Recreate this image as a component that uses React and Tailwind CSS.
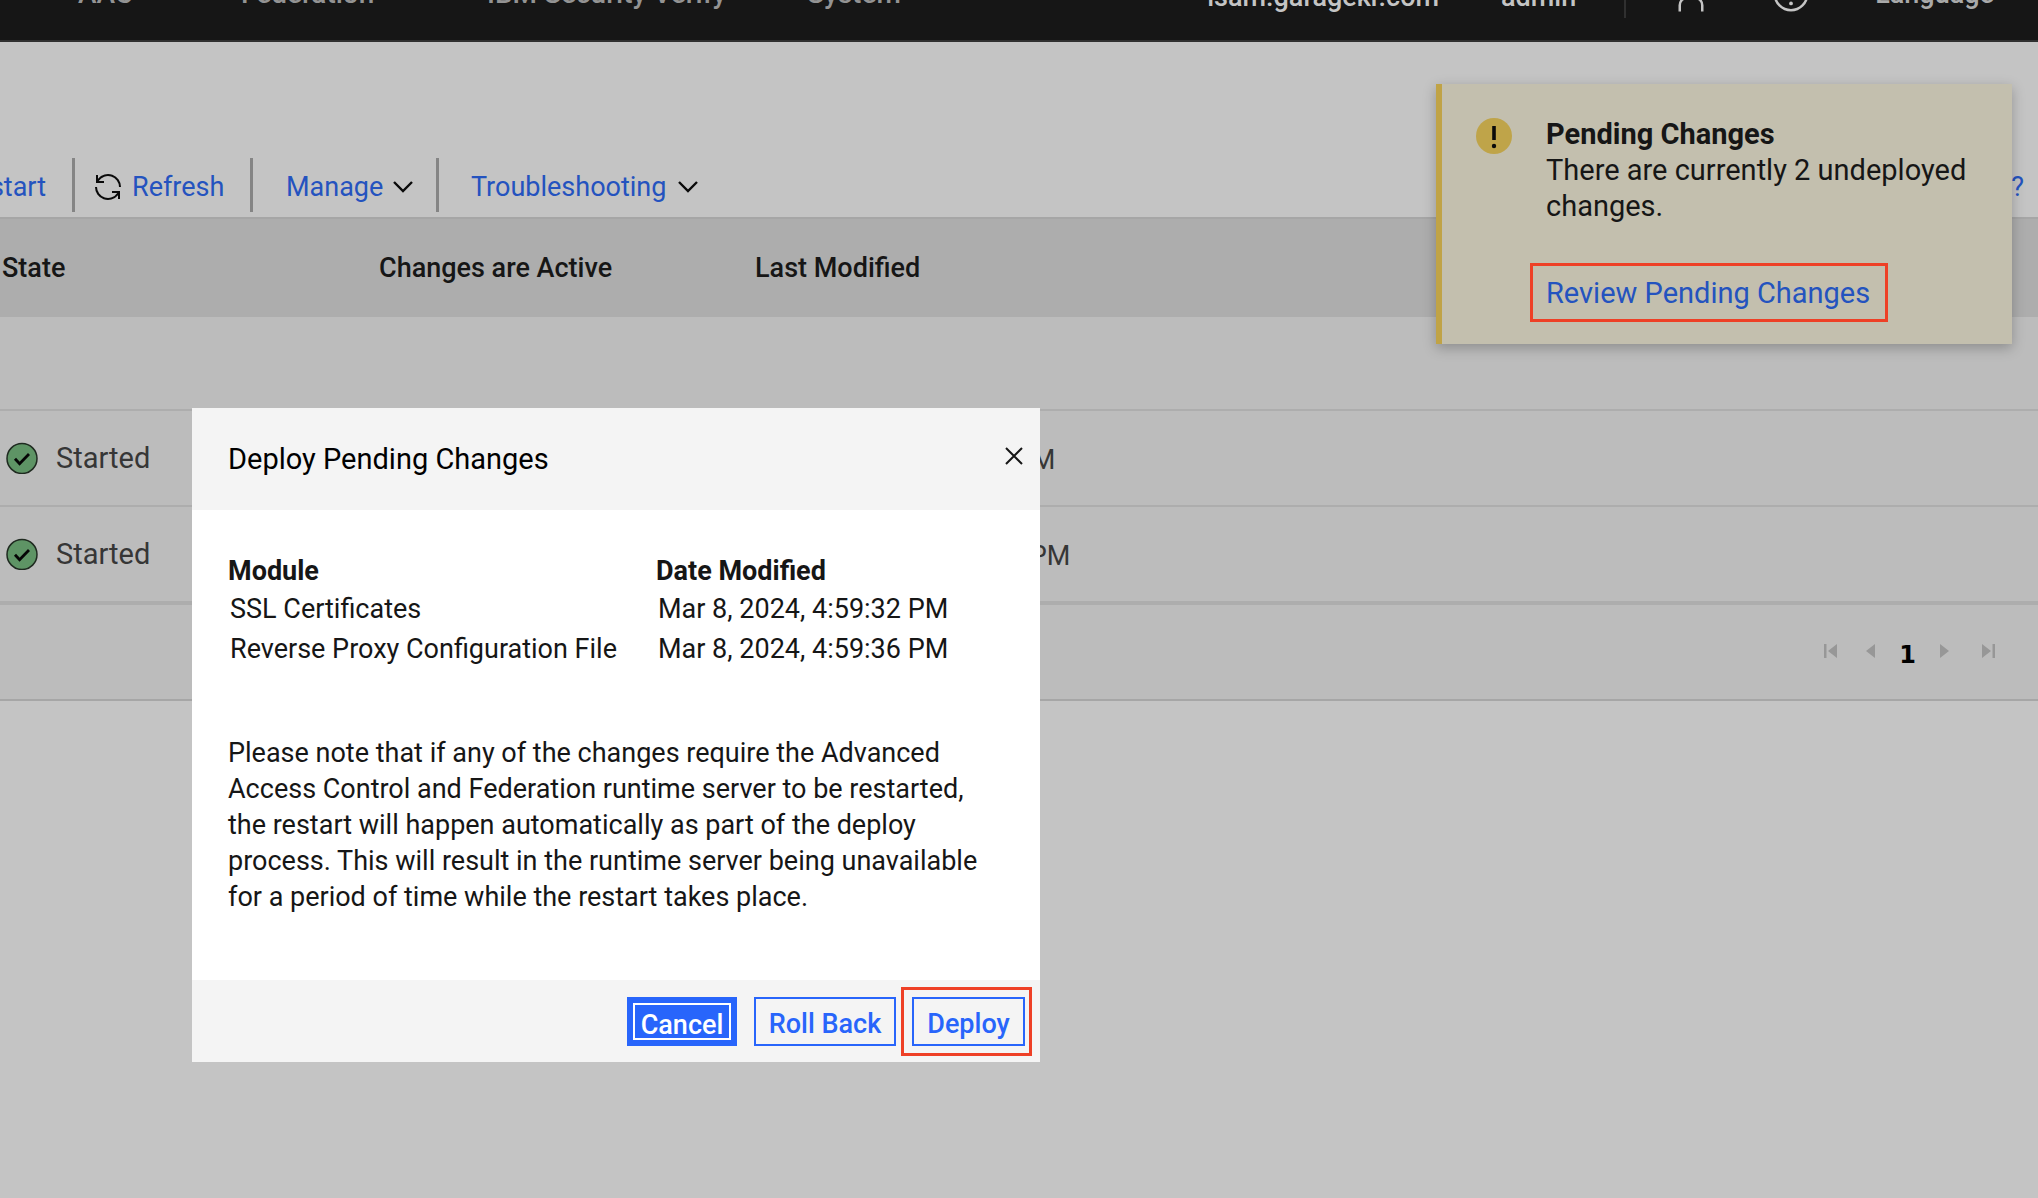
import React from "react";

const topLinks = [
  { label: "AAC", width: "w-[163px]" },
  { label: "Federation", width: "w-[246px]" },
  { label: "IBM Security Verify", width: "w-[320px]" },
  { label: "System", width: "w-[120px]" },
];

const instances = [
  { state: "Started", active: "True", modified: "Mar 8, 2024, 4:59:32 PM", row: "h-24 border-b-2" },
  { state: "Started", active: "True", modified: "Mar 8, 2024, 10:57:28 PM", row: "h-[98px] border-b-4" },
];

const modules = [
  { name: "SSL Certificates", date: "Mar 8, 2024, 4:59:32 PM" },
  { name: "Reverse Proxy Configuration File", date: "Mar 8, 2024, 4:59:36 PM" },
];

function UserIcon() {
  return (
    <svg width="40" height="40" viewBox="0 0 32 32" fill="currentColor" aria-hidden="true">
      <path d="M16 4a5 5 0 1 1-5 5 5 5 0 0 1 5-5m0-2a7 7 0 1 0 7 7 7 7 0 0 0-7-7zM26 30h-2v-5a5 5 0 0 0-5-5h-6a5 5 0 0 0-5 5v5H6v-5a7 7 0 0 1 7-7h6a7 7 0 0 1 7 7z" />
    </svg>
  );
}

function HelpIcon() {
  return (
    <svg width="40" height="40" viewBox="0 0 32 32" fill="currentColor" aria-hidden="true">
      <path d="M16 2a14 14 0 1 0 14 14A14 14 0 0 0 16 2zm0 26a12 12 0 1 1 12-12 12 12 0 0 1-12 12z" />
      <circle cx="16" cy="23.5" r="1.5" />
      <path d="M17 8h-1.5a4.5 4.5 0 0 0-4.5 4.5v.5h2v-.5a2.5 2.5 0 0 1 2.5-2.5H17a2.5 2.5 0 0 1 0 5h-2v4.5h2V17a4.5 4.5 0 0 0 0-9z" />
    </svg>
  );
}

function RefreshIcon() {
  return (
    <svg width="32" height="32" viewBox="0 0 32 32" fill="#0a0a0a" aria-hidden="true">
      <path d="M12 10H6.78A11 11 0 0 1 27 16h2A13 13 0 0 0 6 7.68V4H4v8h8zM20 22h5.22A11 11 0 0 1 5 16H3a13 13 0 0 0 23 8.32V28h2v-8h-8z" />
    </svg>
  );
}

function Chevron() {
  return (
    <svg width="20" height="12" viewBox="0 0 20 12" fill="none" stroke="#0a0a0a" strokeWidth="2.4" aria-hidden="true">
      <path d="M1 1l9 9 9-9" />
    </svg>
  );
}

function CheckIcon() {
  return (
    <svg width="32" height="32" viewBox="0 0 32 32" fill="none" aria-hidden="true">
      <circle cx="16" cy="16.5" r="15" fill="#5e9465" stroke="#1f2a20" strokeWidth="1.5" />
      <path d="M9 16.7l4.6 5L23 12.1" stroke="#050505" strokeWidth="2.8" />
    </svg>
  );
}

function WarningIcon() {
  return (
    <svg className="mt-0.5 shrink-0" width="36" height="36" viewBox="0 0 36 36" aria-hidden="true">
      <circle cx="18" cy="18" r="18" fill="#bfa449" />
      <rect x="16.2" y="8" width="3.6" height="14" fill="#0a0a0a" />
      <circle cx="18" cy="28" r="2.2" fill="#0a0a0a" />
    </svg>
  );
}

function PageButton({ label, children, width }) {
  return (
    <button type="button" aria-label={label} className="text-[#979797]">
      <svg width={width} height="16" viewBox={`0 0 ${width} 16`} fill="currentColor" aria-hidden="true">
        {children}
      </svg>
    </button>
  );
}

function Separator() {
  return <span className="w-[3px] shrink-0 bg-[#858585]" />;
}

function TopBar() {
  return (
    <header className="h-[42px] overflow-hidden border-b-2 border-[#303030] bg-[#161616] text-[27px] leading-9 font-medium text-[#c4c4c4]">
      <div className="-mt-[54px] flex h-24 items-center justify-between pr-[44px] pl-[78px]">
        <nav className="flex text-[28px] text-[#939393]">
          {topLinks.map((l) => (
            <a key={l.label} href="#" className={`${l.width} shrink-0 whitespace-nowrap`}>
              {l.label}
            </a>
          ))}
        </nav>
        <div className="flex items-center">
          <div className="flex gap-[62px] pt-1.5 pr-12">
            <span>isam.garagekr.com</span>
            <span>admin</span>
          </div>
          <span className="mr-[45px] h-12 w-0.5 bg-[#303030]" />
          <button type="button" aria-label="User" className="mr-[60px]">
            <UserIcon />
          </button>
          <button type="button" aria-label="Help" className="mr-16">
            <HelpIcon />
          </button>
          <button type="button" className="text-[#a9a9a9]">Language</button>
        </div>
      </div>
    </header>
  );
}

function Toolbar() {
  return (
    <div className="flex h-[54px] text-[#2453bf]">
      <button type="button" className="mr-[26px] flex w-[46px] items-center justify-end overflow-hidden pt-1">
        <span>Restart</span>
      </button>
      <Separator />
      <button type="button" className="flex w-[175px] items-center gap-2 pt-1 pl-[17px]">
        <RefreshIcon />
        Refresh
      </button>
      <Separator />
      <button type="button" className="flex w-[183px] items-center gap-2.5 pt-1 pl-[33px]">
        Manage
        <Chevron />
      </button>
      <Separator />
      <button type="button" className="flex items-center gap-3 pt-1 pl-8">
        Troubleshooting
        <Chevron />
      </button>
      <button type="button" aria-label="Help" className="ml-auto pt-1 pr-[14px]">
        ?
      </button>
    </div>
  );
}

function InstanceTable() {
  return (
    <table className="w-full table-fixed border-separate border-spacing-0 bg-[#bcbcbc] text-left">
      <thead>
        <tr>
          <th className="h-[100px] w-[377px] border-t-2 border-[#a6a6a6] bg-[#adadad] pl-0.5 font-medium text-[#161616]">State</th>
          <th className="w-[376px] border-t-2 border-[#a6a6a6] bg-[#adadad] pl-0.5 font-medium text-[#161616]">Changes are Active</th>
          <th className="border-t-2 border-[#a6a6a6] bg-[#adadad] pl-0.5 font-medium text-[#161616]">Last Modified</th>
        </tr>
      </thead>
      <tbody className="text-[#363636]">
        <tr>
          <td colSpan={3} className="h-[94px] border-b-2 border-[#adadad]" />
        </tr>
        {instances.map((r) => (
          <tr key={r.modified}>
            <td className={`${r.row} border-[#adadad] pl-1.5`}>
              <div className="flex items-center gap-[18px] text-[29px]">
                <CheckIcon />
                {r.state}
              </div>
            </td>
            <td className={`${r.row} border-[#adadad] pl-0.5`} />
            <td className={`${r.row} border-[#adadad] pt-1 pl-3`}>{r.modified}</td>
          </tr>
        ))}
      </tbody>
    </table>
  );
}

function Pagination() {
  return (
    <nav aria-label="Pages" className="flex h-24 items-center justify-end border-b-2 border-[#a6a6a6] bg-[#bcbcbc] pr-[43px] pb-0.5">
      <div className="flex items-center">
        <PageButton label="First page" width={13}>
          <path d="M0 1h2.5v14H0zM13 1v14L4 8z" />
        </PageButton>
        <span className="w-[29px]" />
        <PageButton label="Previous page" width={9}>
          <path d="M9 1v14L0 8z" />
        </PageButton>
      </div>
      <span className="px-6 pt-2 font-['DejaVu_Sans',sans-serif] text-2xl font-bold text-black">1</span>
      <div className="flex items-center">
        <PageButton label="Next page" width={9}>
          <path d="M0 1v14l9-7z" />
        </PageButton>
        <span className="w-[33px]" />
        <PageButton label="Last page" width={13}>
          <path d="M0 1v14l9-7zM10.500 1H13v14h-2.500z" />
        </PageButton>
      </div>
    </nav>
  );
}

function PendingNotice() {
  return (
    <aside className="absolute top-[84px] right-[26px] flex w-[576px] gap-[34px] border-l-[6px] border-[#c0a346] bg-[#c3bfae] pt-8 pr-5 pb-[22px] pl-[34px] text-[29px] shadow-[0_4px_12px_rgba(0,0,0,0.25)]">
      <WarningIcon />
      <div className="text-[#161616]">
        <h2 className="font-bold">Pending Changes</h2>
        <p>There are currently 2 undeployed changes.</p>
        <a href="#" className="mt-[39px] -ml-4 flex h-[59px] w-[358px] items-center border-[3px] border-[#ee4026] pl-[13px] whitespace-nowrap text-[#2453bf]">
          Review Pending Changes
        </a>
      </div>
    </aside>
  );
}

function DeployDialog() {
  return (
    <section role="dialog" aria-labelledby="deploy-title" className="absolute top-[408px] left-[192px] w-[848px] bg-white text-[#161616]">
      <div className="flex h-[102px] items-center justify-between bg-[#f4f4f4] pr-[17px] pl-9">
        <h2 id="deploy-title" className="text-[29px] text-black">Deploy Pending Changes</h2>
        <button type="button" aria-label="Close" className="pb-1.5">
          <svg width="18" height="18" viewBox="0 0 18 18" fill="none" stroke="#161616" strokeWidth="2" aria-hidden="true">
            <path d="M1 1l16 16M17 1L1 17" />
          </svg>
        </button>
      </div>
      <div className="px-9 pt-[43px] pb-[65px]">
        <table className="w-full table-fixed border-separate border-spacing-0 text-left">
          <thead>
            <tr>
              <th className="w-[428px] p-0 font-bold">Module</th>
              <th className="p-0 font-bold">Date Modified</th>
            </tr>
          </thead>
          <tbody>
            {modules.map((m) => (
              <tr key={m.name}>
                <td className="h-10 pl-0.5">{m.name}</td>
                <td className="h-10 pl-0.5">{m.date}</td>
              </tr>
            ))}
          </tbody>
        </table>
        <p className="mt-[66px]">
          Please note that if any of the changes require the Advanced Access Control and Federation runtime server to be
          restarted, the restart will happen automatically as part of the deploy process. This will result in the runtime
          server being unavailable for a period of time while the restart takes place.
        </p>
      </div>
      <div className="flex h-[82px] items-center justify-end bg-[#f4f4f4] pr-2 font-medium text-[#2865fb]">
        <button type="button" className="mr-[17px] h-[49px] w-[110px] border-[6px] border-[#2865fb] bg-[#2865fb] pt-1.5 leading-8 text-white shadow-[inset_0_0_0_2px_#fff]">
          Cancel
        </button>
        <button type="button" className="mr-[5px] h-[49px] w-[142px] border-2 border-[#2865fb] pt-1.5">
          Roll Back
        </button>
        <div className="border-[3px] border-[#ee4026] py-[7px] pr-1 pl-2">
          <button type="button" className="block h-[49px] w-[113px] border-2 border-[#2865fb] pt-1.5">
            Deploy
          </button>
        </div>
      </div>
    </section>
  );
}

export default function App() {
  return (
    <div className="relative min-h-screen overflow-hidden bg-[#c4c4c4] font-['Roboto',sans-serif] text-[27px] leading-9">
      <TopBar />
      <main>
        <div className="pt-[116px] pb-[5px]">
          <Toolbar />
        </div>
        <InstanceTable />
        <Pagination />
      </main>
      <PendingNotice />
      <DeployDialog />
    </div>
  );
}
